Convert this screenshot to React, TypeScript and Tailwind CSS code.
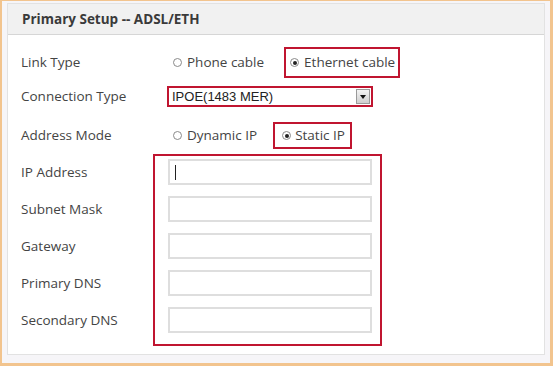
import type { FC, ReactNode } from 'react';

const RED = 'border-[#c01530]';

const Radio: FC<{ checked?: boolean }> = ({ checked }) => (
  <span className="flex h-[9px] w-[9px] shrink-0 items-center justify-center rounded-full border border-[#8a8a8a] bg-white">
    {checked && <span className="h-[4px] w-[4px] rounded-full bg-[#222]" />}
  </span>
);

const Label: FC<{ children: ReactNode; w?: string }> = ({ children, w = 'w-[146px]' }) => (
  <div className={`${w} shrink-0 text-[13.5px] text-[#444]`}>{children}</div>
);

const Field: FC<{ cursor?: boolean }> = ({ cursor }) => (
  <div className="flex h-[26px] w-[204px] items-center border-2 border-[#dedede] bg-white pl-[5px]">
    {cursor && <span className="h-[15px] w-px bg-[#222]" />}
  </div>
);

export default function App() {
  const fields = ['IP Address', 'Subnet Mask', 'Gateway', 'Primary DNS', 'Secondary DNS'];

  return (
    <div
      className="h-[366px] w-[553px] overflow-hidden border-t border-r-[3px] border-b-[3px] border-l-2 border-[#f2c48e] bg-[#f6f5f8] pl-[5px] pr-[5px] pt-[2px]"
      style={{ fontFamily: '"Open Sans", "Noto Sans", sans-serif' }}
    >
      <div className="h-[352px] border border-[#e2e2e2] bg-white">
        {/* header */}
        <div className="flex h-[31px] items-center border-b border-[#d6d6d6] bg-[#f1f1f1] pl-[14px] text-[13.5px] font-bold text-[#3a3a3a]">
          Primary Setup -- ADSL/ETH
        </div>

        <div className="pl-[13px] pt-[12px]">
          {/* link type */}
          <div className="flex h-[31px] items-center">
            <Label>Link Type</Label>
            <div className="flex items-center pl-[6px]">
              <Radio />
              <span className="ml-[5px] text-[13.5px] text-[#444]">Phone cable</span>
            </div>
            <div className={`ml-[20px] flex h-[31px] items-center border-2 ${RED} pl-[4px] pr-[3px]`}>
              <Radio checked />
              <span className="ml-[5px] text-[13.5px] text-[#444]">Ethernet cable</span>
            </div>
          </div>

          {/* connection type */}
          <div className="mt-[8px] flex h-[21px] items-center">
            <Label>Connection Type</Label>
            <div className={`flex h-[21px] w-[206px] items-center border-2 ${RED} bg-white`}>
              <span
                className="flex-1 pl-[3px] text-[13px] text-[#222]"
                style={{ fontFamily: '"Liberation Sans", Arial, sans-serif' }}
              >
                IPOE(1483 MER)
              </span>
              <span className="mr-[1px] flex h-[15px] w-[14px] items-center justify-center border border-[#9a9a9a] bg-gradient-to-b from-[#f4f4f4] to-[#cfcfcf]">
                <span className="h-0 w-0 border-x-[3px] border-t-[4px] border-x-transparent border-t-[#111]" />
              </span>
            </div>
          </div>

          {/* address mode */}
          <div className="mt-[15px] flex h-[27px] items-center">
            <Label>Address Mode</Label>
            <div className="flex items-center pl-[6px]">
              <Radio />
              <span className="ml-[5px] text-[13.5px] text-[#444]">Dynamic IP</span>
            </div>
            <div className={`ml-[16px] flex h-[27px] items-center border-2 ${RED} pl-[7px] pr-[5px]`}>
              <Radio checked />
              <span className="ml-[4px] text-[13.5px] text-[#444]">Static IP</span>
            </div>
          </div>

          {/* static fields */}
          <div className="mt-[5px] flex">
            <div className="flex w-[132px] shrink-0 flex-col">
              {fields.map((f) => (
                <div key={f} className="flex h-[37px] items-center">
                  <Label w="w-[132px]">{f}</Label>
                </div>
              ))}
            </div>
            <div className={`flex w-[229px] flex-col gap-[11px] border-2 ${RED} pb-[11px] pl-[13px] pt-[3px]`}>
              {fields.map((f, i) => (
                <Field key={f} cursor={i === 0} />
              ))}
            </div>
          </div>
        </div>
      </div>
    </div>
  );
}
